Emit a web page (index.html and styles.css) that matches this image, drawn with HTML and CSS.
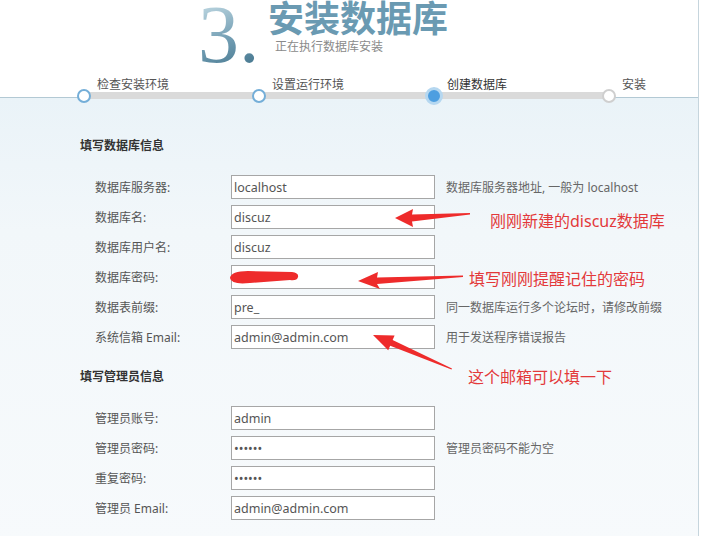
FILE: index.html
```html
<!DOCTYPE html>
<html>
<head>
  <meta charset="utf-8">
  <title>安装数据库</title>
  <link rel="stylesheet" href="styles.css">
</head>
<body>

  <div class="page">
    <div class="header">
      <div class="brand">
        <div class="step-num">3.</div>
        <div class="step-title">
          <h1>安装数据库</h1>
          <p>正在执行数据库安装</p>
        </div>
      </div>

      <!-- install progress -->
      <ul class="steps">
        <li class="done"><span class="dot"></span><span class="name">检查安装环境</span></li>
        <li class="done"><span class="dot"></span><span class="name">设置运行环境</span></li>
        <li class="current"><span class="dot"></span><span class="name">创建数据库</span></li>
        <li class="todo"><span class="dot"></span><span class="name">安装</span></li>
      </ul>
    </div>

    <div class="main">
      <h3>填写数据库信息</h3>
      <div class="form">
        <label for="dbhost">数据库服务器:</label>
        <input type="text" id="dbhost" value="localhost">
        <span class="tip">数据库服务器地址, 一般为 localhost</span>

        <label for="dbname">数据库名:</label>
        <input type="text" id="dbname" value="discuz">
        <span class="tip"></span>

        <label for="dbuser">数据库用户名:</label>
        <input type="text" id="dbuser" value="discuz">
        <span class="tip"></span>

        <label for="dbpw">数据库密码:</label>
        <input type="text" id="dbpw" value="">
        <span class="tip"></span>

        <label for="tablepre">数据表前缀:</label>
        <input type="text" id="tablepre" value="pre_">
        <span class="tip">同一数据库运行多个论坛时，请修改前缀</span>

        <label for="adminemail">系统信箱 Email:</label>
        <input type="text" id="adminemail" value="admin@admin.com">
        <span class="tip">用于发送程序错误报告</span>
      </div>

      <h3 class="second">填写管理员信息</h3>
      <div class="form">
        <label for="username">管理员账号:</label>
        <input type="text" id="username" value="admin">
        <span class="tip"></span>

        <label for="password">管理员密码:</label>
        <input type="password" id="password" value="123456">
        <span class="tip">管理员密码不能为空</span>

        <label for="password2">重复密码:</label>
        <input type="password" id="password2" value="123456">
        <span class="tip"></span>

        <label for="email">管理员 Email:</label>
        <input type="text" id="email" value="admin@admin.com">
        <span class="tip"></span>
      </div>
    </div>

    <!-- hand-drawn notes on top of the screenshot -->
    <svg class="marks" width="701" height="536" viewBox="0 0 701 536">
      <path d="M230 278 Q231 271 248 271 L292 272 Q299 273 298 277 Q297 281 290 280 L250 283 Q231 285 230 278Z"/>
      <polygon points="395,218 413,209 412,214.5 470,213 470,214.5 412,221.5 413,227"/>
      <polygon points="358,281 378,272 377,277.5 463,275.5 463,277 377,284 380,289"/>
      <polygon points="373,335 394.6,335.6 392.6,340.1 452,368.5 451.5,369.5 390.2,345.7 388.2,350.2"/>
    </svg>
    <div class="note note-name">刚刚新建的discuz数据库</div>
    <div class="note note-pw">填写刚刚提醒记住的密码</div>
    <div class="note note-mail">这个邮箱可以填一下</div>
  </div>

</body>
</html>
```

FILE: styles.css
```css
body {
  margin: 0;
  padding: 0;
  background: #fff;
  font-family: "Noto Sans", "Noto Sans CJK SC", sans-serif;
  font-size: 12px;
  color: #555;
  overflow: hidden;
}

.page {
  position: relative;
  width: 698px;
  border-right: 1px solid #c6d5dd;
}

/* header */

.header {
  height: 97px;
}

.brand {
  display: flex;
  align-items: flex-start;
  padding-left: 198px;
}

.step-num {
  width: 70px;
  margin-top: 3px;
  font-family: "Liberation Serif", serif;
  font-size: 82px;
  line-height: 64px;
  background: linear-gradient(160deg, #b3cfdb 10%, #6f9bb1 55%, #3f7189 100%);
  -webkit-background-clip: text;
  background-clip: text;
  color: transparent;
}

h1 {
  margin: 0;
  font-size: 36px;
  line-height: 38px;
  font-weight: bold;
  color: #6a9ab2;
}

.step-title p {
  margin: 2px 0 0 7px;
  font-size: 12px;
  line-height: 14px;
  color: #8a8a8a;
}

.steps {
  position: relative;
  z-index: 1;
  display: flex;
  list-style: none;
  margin: 10px 0 -6px 77px;
  padding: 0;
}

.steps::before {
  content: "";
  position: absolute;
  left: 7px;
  top: 15px;
  width: 525px;
  height: 7px;
  background: #dadada;
}

.steps li {
  position: relative;
  flex: none;
  width: 175px;
  display: grid;
  grid-template-columns: 14px 1fr;
  grid-template-rows: 12px 14px;
  column-gap: 6px;
}

.steps li:last-child {
  width: auto;
}

.steps .name {
  grid-column: 2;
  grid-row: 1;
  align-self: end;
  margin-bottom: -2px;
  font-size: 12px;
  line-height: 12px;
  color: #555;
  white-space: nowrap;
}

.steps .dot {
  grid-column: 1;
  grid-row: 2;
  box-sizing: border-box;
  width: 14px;
  height: 14px;
  border-radius: 50%;
  border: 2px solid #74aed8;
  background: #fff;
}

.steps .current .dot {
  width: 18px;
  height: 18px;
  margin: -2px 0 0 -2px;
  border: 3px solid #b5d7f0;
  background: #4d9ee0;
}

.steps .current .name {
  color: #333;
}

.steps .todo .dot {
  border-color: #cfcfcf;
}

/* form */

.main {
  box-sizing: border-box;
  min-height: calc(100vh - 97px);
  padding: 40px 0 20px 80px;
  border-top: 1px solid #b3c9d4;
  background: linear-gradient(#eaf3f8, #f2f7fa 30%, #f7fafc 100%);
}

h3 {
  margin: 0 0 18px;
  font-size: 12px;
  line-height: 16px;
  font-weight: bold;
  color: #333;
}

h3.second {
  margin-top: 17px;
}

.form {
  display: grid;
  grid-template-columns: 125px 204px auto;
  grid-auto-rows: 30px;
  column-gap: 11px;
  align-items: center;
  margin-left: 15px;
}

.form label {
  font-size: 12px;
  color: #555;
}

.form input {
  box-sizing: border-box;
  width: 204px;
  height: 24px;
  margin: 0;
  padding: 0 2px;
  border: 1px solid #a6a6a6;
  background: #fff;
  font-family: "Noto Sans", sans-serif;
  font-size: 12.5px;
  color: #555;
  outline: none;
}

.tip {
  font-size: 12px;
  color: #666;
  white-space: nowrap;
}

/* annotations */

.marks {
  position: absolute;
  left: 0;
  top: 0;
  z-index: 2;
  pointer-events: none;
  fill: #ee2b2b;
}

.note {
  position: absolute;
  z-index: 2;
  font-size: 16px;
  line-height: 20px;
  color: #e3393a;
  white-space: nowrap;
}

.note-name {
  left: 490px;
  top: 211px;
}

.note-pw {
  left: 469px;
  top: 269px;
}

.note-mail {
  left: 468px;
  top: 367px;
}
```
